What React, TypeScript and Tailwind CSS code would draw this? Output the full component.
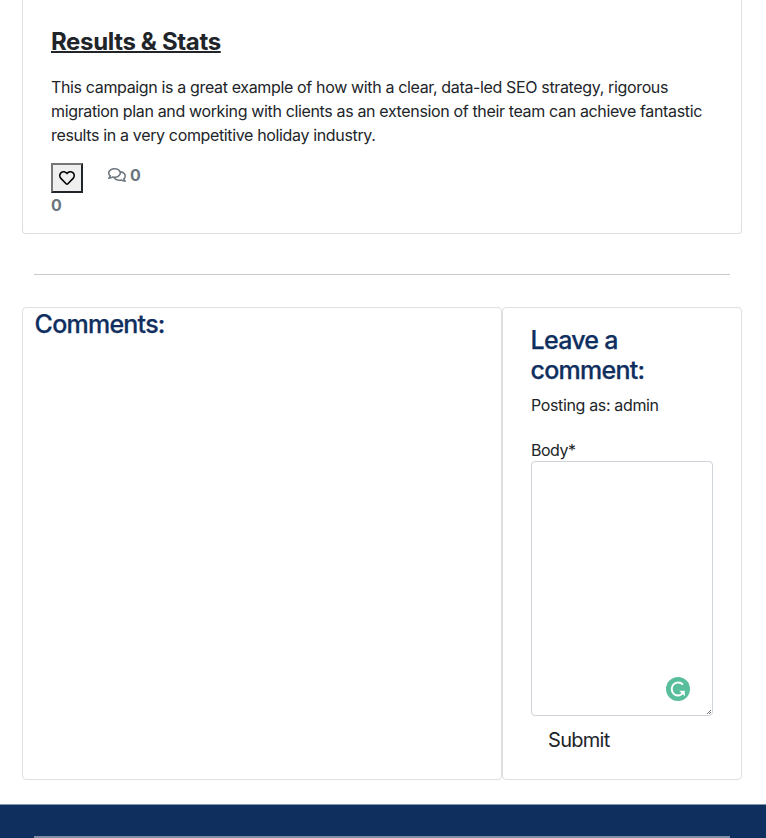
import { FaRegHeart, FaRegComments } from "react-icons/fa";

export default function App() {
  return (
    <div className="h-[838px] overflow-hidden bg-white font-['Inter','Liberation_Sans',sans-serif] text-base text-[#212529]">
      <main className="w-[764px] px-[22px]">
        <article className="h-[234px] rounded-b border border-t-0 border-[#dfdfdf] px-7 pt-[27px]">
          <h2 className="text-2xl leading-[30px] font-bold tracking-[-0.36px] underline decoration-2">Results &amp; Stats</h2>
          <p className="mt-[18px] leading-6 tracking-[-0.353px] whitespace-nowrap">
            This campaign is a great example of how with a clear, data-led SEO strategy, rigorous<br />
            migration plan and working with clients as an extension of their team can achieve fantastic<br />
            results in a very competitive holiday industry.
          </p>
          <div className="mt-4 flex font-bold text-[#6c757d]">
            <div className="w-[57px]">
              <button className="flex h-[30px] w-8 items-center justify-center border-2 border-t-[#767676] border-r-[#212529] border-b-[#212529] border-l-[#767676] bg-[#efefef] text-black"><FaRegHeart size={16} /></button>
              <div className="leading-6">0</div>
            </div>
            <div className="flex h-6 items-center gap-1"><FaRegComments size={18} />0</div>
          </div>
        </article>
        <hr className="mx-3 mt-10 border-[#c8c9ca]" />
        <div className="mt-8 flex h-[473px]">
          <section className="w-[480px] rounded border border-[#dfdfdf] px-3 pt-px">
            <h3 className="-ml-[0.4px] text-[25px] leading-[30px] font-medium tracking-[-0.76px] text-[#0f2f5f] [-webkit-text-stroke:0.25px_#0f2f5f]">Comments:</h3>
          </section>
          <section className="w-[240px] rounded border border-[#dfdfdf] px-7 pt-[17px]">
            <h3 className="-ml-[0.4px] text-[25px] leading-[30px] font-medium tracking-[-0.76px] text-[#0f2f5f] [-webkit-text-stroke:0.25px_#0f2f5f]">Leave a comment:</h3>
            <p className="mt-2 leading-6 tracking-[-0.353px]">Posting as: admin</p>
            <label className="mt-[21px] block leading-6 tracking-[-0.5px]">Body*</label>
            <div className="relative -mt-px h-[255px]">
              <textarea className="block h-[255px] w-[182px] resize-none rounded border border-[#ced4da]" />
              <svg className="absolute right-[23px] bottom-[15.5px]" width="24" height="24" viewBox="0 0 24 24" fill="none" stroke="white" strokeWidth="1.8">
                <circle cx="12" cy="12" r="12" fill="#58be9b" stroke="none" />
                <path d="M17 7.6A6.5 6.5 0 1 0 12 18.5C14.2 18.5 15.7 17.6 16.8 15.8" />
                <path d="M13.2 13.7H18.8V19.2Z" fill="white" stroke="none" />
              </svg>
              <svg className="absolute right-[2px] bottom-[2px]" width="4" height="4" viewBox="0 0 4 4" stroke="#555" strokeWidth=".8"><path d="M0 4L4 0M2 4L4 2" /></svg>
            </div>
            <button className="mt-[9px] ml-[17px] text-xl leading-[30px] tracking-[-0.7px]">Submit</button>
          </section>
        </div>
      </main>
      <footer className="mt-6 h-[34px] border-t border-[#8594aa] bg-[#0f2f5f] pt-[31px] pr-9 pl-[34px]"><hr className="border-t-2 border-[#808da6]" /></footer>
    </div>
  );
}
